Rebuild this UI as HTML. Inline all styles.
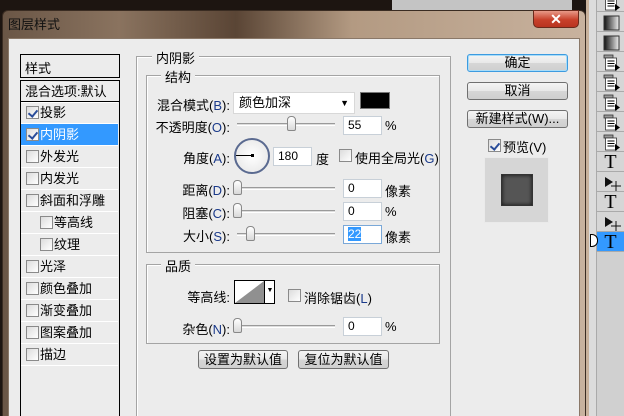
<!DOCTYPE html>
<html style="overflow:hidden;width:624px;height:416px"><head><meta charset="utf-8"><style>
*{margin:0;padding:0;box-sizing:border-box}
body{width:624px;height:416px;overflow:hidden;position:relative;background:#1d1511;font-family:"Liberation Sans","Noto Sans CJK SC",sans-serif;font-size:13px;color:#000}
.a{position:absolute}
.lbl{position:absolute;text-align:right;white-space:nowrap}
.inp{position:absolute;background:#fff;border:1px solid #c8d0d8;height:19px;padding-left:4px;line-height:17px;font-size:12px}
.sl{position:absolute;height:3px;border-top:1px solid #9a9a9a;border-bottom:1px solid #fff;background:#ddd}
.th{position:absolute;width:9px;height:15px;background:linear-gradient(#fff,#d8d8d8);border:1px solid #888;border-radius:4px 4px 2px 2px}
.cb{position:absolute;width:13px;height:13px;border:1px solid #8a8a8a;background:linear-gradient(135deg,#dcdcdc,#fff)}
.cb.c::after{content:"";position:absolute;left:3px;top:1px;width:4px;height:7px;border:solid #2a4d9a;border-width:0 2px 2px 0;transform:rotate(40deg)}
.it{position:absolute;left:21px;width:97px;height:22px;border-bottom:1px solid #fff;line-height:21px}
.btn{position:absolute;border:1px solid #707070;border-radius:3px;background:linear-gradient(#f4f4f4 0,#e8e8e8 50%,#d6d6d6 51%,#cfcfcf);text-align:center;line-height:15px}
.grp{position:absolute;border:1px solid #a4a4a4;box-shadow:1px 1px 0 #fff inset}
.gt{position:absolute;background:#ececec;padding:0 4px}
.row{position:absolute;left:597px;width:27px;height:20px;border-bottom:1px solid #aaa;background:#d6d6d6;text-align:center;font-family:"Liberation Serif",serif;font-size:20px;line-height:20px}
.row svg{position:absolute;left:6px;top:2px}
</style></head><body>
<div class="a" style="left:392px;top:0;width:180px;height:10px;background:#c4c4c4"></div>
<div class="a" style="left:586px;top:0;width:38px;height:416px;background:#d0d0d0"></div>
<div class="a" style="left:586px;top:0;width:3px;height:416px;background:#c9b29c"></div>
<div class="a" style="left:589px;top:0;width:8px;height:416px;background:#dcdcdc;border-right:1px solid #aaa"></div>
<svg width="0" height="0" style="position:absolute"><defs>
<g id="doc"><rect x="1" y="1" width="9" height="3" fill="#999" stroke="#333" stroke-width=".8"/><rect x="2.5" y="4" width="11" height="12" fill="#fff" stroke="#333" stroke-width=".8"/><path d="M4.5 7h7M4.5 9.5h7M4.5 12h7" stroke="#000" stroke-width="1"/><path d="M12 10l5 3.5-5 3.5z" fill="#000"/></g>
<linearGradient id="gr" x1="0" x2="1"><stop offset="0" stop-color="#111"/><stop offset="1" stop-color="#eee"/></linearGradient>
</defs></svg>
<div class="row" style="top:-8px"><svg width="18" height="18"><use href="#doc"/></svg></div>
<div class="row" style="top:12px"><svg width="18" height="18"><rect x="1" y="2" width="15" height="14" fill="url(#gr)" stroke="#333"/></svg></div>
<div class="row" style="top:32px"><svg width="18" height="18"><rect x="1" y="2" width="15" height="14" fill="url(#gr)" stroke="#333"/></svg></div>
<div class="row" style="top:52px"><svg width="18" height="18"><use href="#doc"/></svg></div>
<div class="row" style="top:72px"><svg width="18" height="18"><use href="#doc"/></svg></div>
<div class="row" style="top:92px"><svg width="18" height="18"><use href="#doc"/></svg></div>
<div class="row" style="top:112px"><svg width="18" height="18"><use href="#doc"/></svg></div>
<div class="row" style="top:132px"><svg width="18" height="18"><use href="#doc"/></svg></div>
<div class="row" style="top:152px">T</div>
<div class="row" style="top:172px"><svg width="20" height="18"><path d="M2 3l8 5-8 5z" fill="#111"/><path d="M13 7v10M8 12h10" stroke="#111"/></svg></div>
<div class="row" style="top:192px">T</div>
<div class="row" style="top:212px"><svg width="20" height="18"><path d="M2 3l8 5-8 5z" fill="#111"/><path d="M13 7v10M8 12h10" stroke="#111"/></svg></div>
<div class="row" style="top:232px;background:#3399ff">T</div>
<div class="a" style="left:590px;top:234px;width:8px;height:13px;background:#fff;border:1px solid #000;border-radius:0 6px 6px 0"></div>
<!-- dialog -->
<div class="a" style="left:2px;top:10px;width:584px;height:406px;border:1px solid #3a2c22;border-bottom:0;border-radius:6px 6px 0 0;background:linear-gradient(90deg,#6a5646 0,#8a735f 20%,#5a4535 40%,#b39a82 60%,#c8b29e 100%)"></div>
<div class="a" style="left:8px;top:14px;color:#111;font-size:13px">图层样式</div>
<div class="a" style="left:533px;top:10px;width:46px;height:18px;border:1px solid #6a2a1c;border-radius:0 0 5px 5px;background:linear-gradient(#e89a88,#c8402a 55%,#b83420);color:#fff;text-align:center;font-weight:bold;line-height:16px;font-size:14px">✕</div>
<div class="a" style="left:8px;top:38px;width:572px;height:378px;background:#ececec;border:1px solid #8a7868;border-bottom:0"></div>
<!-- left list -->
<div class="a" style="left:20px;top:54px;width:100px;height:362px;background:#ececec;border:1px solid #000;border-bottom:0"></div>
<div class="a" style="left:25px;top:58px">样式</div>
<div class="a" style="left:20px;top:77px;width:100px;height:4px;border-top:1px solid #000;border-bottom:1px solid #000;background:#ececec"></div>
<div class="it" style="top:81px;padding-left:4px">混合选项:默认</div>
<div class="a" style="left:20px;top:101px;width:100px;height:1px;background:#000"></div>
<div class="it" style="top:102px;padding-left:19px">投影</div><div class="cb c" style="left:26px;top:106px"></div>
<div class="it" style="top:124px;padding-left:19px;background:#3399ff;color:#fff">内阴影</div><div class="cb c" style="left:26px;top:128px"></div>
<div class="it" style="top:146px;padding-left:19px">外发光</div><div class="cb" style="left:26px;top:150px"></div>
<div class="it" style="top:168px;padding-left:19px">内发光</div><div class="cb" style="left:26px;top:172px"></div>
<div class="it" style="top:190px;padding-left:19px">斜面和浮雕</div><div class="cb" style="left:26px;top:194px"></div>
<div class="it" style="top:212px;padding-left:33px">等高线</div><div class="cb" style="left:40px;top:216px"></div>
<div class="it" style="top:234px;padding-left:33px">纹理</div><div class="cb" style="left:40px;top:238px"></div>
<div class="it" style="top:256px;padding-left:19px">光泽</div><div class="cb" style="left:26px;top:260px"></div>
<div class="it" style="top:278px;padding-left:19px">颜色叠加</div><div class="cb" style="left:26px;top:282px"></div>
<div class="it" style="top:300px;padding-left:19px">渐变叠加</div><div class="cb" style="left:26px;top:304px"></div>
<div class="it" style="top:322px;padding-left:19px">图案叠加</div><div class="cb" style="left:26px;top:326px"></div>
<div class="it" style="top:344px;padding-left:19px">描边</div><div class="cb" style="left:26px;top:348px"></div>
<!-- groups -->
<div class="grp" style="left:136px;top:56px;width:315px;height:360px;border-bottom:0"></div>
<div class="gt" style="left:152px;top:48px">内阴影</div>
<div class="grp" style="left:146px;top:75px;width:294px;height:178px"></div>
<div class="gt" style="left:161px;top:67px">结构</div>
<div class="lbl" style="right:394px;top:95px">混合模式(<span style="color:#1a3a8a">B</span>):</div>
<div class="a" style="left:233px;top:92px;width:122px;height:22px;background:#fff;border:1px solid #d8d8d8;padding-left:5px;line-height:20px">颜色加深<span style="position:absolute;right:5px;font-size:9px">▼</span></div>
<div class="a" style="left:360px;top:92px;width:30px;height:17px;background:#000;border:1px solid #777"></div>
<div class="lbl" style="right:394px;top:117px">不透明度(<span style="color:#1a3a8a">O</span>):</div>
<div class="sl" style="left:237px;top:123px;width:98px"></div><div class="th" style="left:287px;top:116px"></div>
<div class="inp" style="left:343px;top:116px;width:39px">55</div><div class="a" style="left:385px;top:118px">%</div>
<div class="lbl" style="right:394px;top:148px">角度(<span style="color:#1a3a8a">A</span>):</div>
<div class="a" style="left:234px;top:138px;width:36px;height:36px;border-radius:50%;border:2px solid #5a6a90;background:radial-gradient(#fff,#e4e4e4)"></div>
<div class="a" style="left:236px;top:155px;width:17px;height:1px;background:#000"></div>
<div class="a" style="left:251px;top:154px;width:3px;height:3px;background:#000"></div>
<div class="inp" style="left:273px;top:147px;width:39px">180</div><div class="a" style="left:316px;top:149px">度</div>
<div class="cb" style="left:339px;top:149px"></div><div class="a" style="left:355px;top:148px">使用全局光(<span style="color:#1a3a8a">G</span>)</div>
<div class="lbl" style="right:394px;top:180px">距离(<span style="color:#1a3a8a">D</span>):</div>
<div class="sl" style="left:237px;top:187px;width:98px"></div><div class="th" style="left:233px;top:180px"></div>
<div class="inp" style="left:343px;top:179px;width:39px">0</div><div class="a" style="left:385px;top:181px">像素</div>
<div class="lbl" style="right:394px;top:203px">阻塞(<span style="color:#1a3a8a">C</span>):</div>
<div class="sl" style="left:237px;top:210px;width:98px"></div><div class="th" style="left:233px;top:203px"></div>
<div class="inp" style="left:343px;top:202px;width:39px">0</div><div class="a" style="left:385px;top:204px">%</div>
<div class="lbl" style="right:394px;top:226px">大小(<span style="color:#1a3a8a">S</span>):</div>
<div class="sl" style="left:237px;top:233px;width:98px"></div><div class="th" style="left:246px;top:226px"></div>
<div class="inp" style="left:343px;top:225px;width:39px;border-color:#7aa8d8"><span style="background:#3399ff;color:#fff">22</span></div><div class="a" style="left:385px;top:227px">像素</div>
<div class="grp" style="left:146px;top:264px;width:294px;height:80px"></div>
<div class="gt" style="left:161px;top:256px">品质</div>
<div class="lbl" style="right:394px;top:287px">等高线:</div>
<div class="a" style="left:234px;top:280px;width:41px;height:24px;border:1px solid #000;background:#fff;overflow:hidden">
<svg width="30" height="22" style="position:absolute;left:0;top:0"><polygon points="0,22 29,0 29,22" fill="#909090"/></svg>
<div style="position:absolute;left:29px;top:0;width:11px;height:22px;border-left:1px solid #000;font-size:7px;text-align:center;line-height:20px">▼</div></div>
<div class="cb" style="left:288px;top:289px"></div><div class="a" style="left:304px;top:288px">消除锯齿(<span style="color:#1a3a8a">L</span>)</div>
<div class="lbl" style="right:394px;top:319px">杂色(<span style="color:#1a3a8a">N</span>):</div>
<div class="sl" style="left:237px;top:325px;width:98px"></div><div class="th" style="left:233px;top:318px"></div>
<div class="inp" style="left:343px;top:317px;width:39px">0</div><div class="a" style="left:385px;top:319px">%</div>
<div class="btn" style="left:198px;top:350px;width:90px;height:19px;line-height:17px">设置为默认值</div>
<div class="btn" style="left:298px;top:350px;width:91px;height:19px;line-height:17px">复位为默认值</div>
<!-- right -->
<div class="btn" style="left:467px;top:54px;width:101px;height:18px;border:1px solid #3c9be0;box-shadow:0 0 0 1px #a8dcf8 inset">确定</div>
<div class="btn" style="left:467px;top:82px;width:101px;height:18px">取消</div>
<div class="btn" style="left:467px;top:110px;width:101px;height:18px">新建样式(W)...</div>
<div class="cb c" style="left:488px;top:139px"></div><div class="a" style="left:503px;top:137px">预览(V)</div>
<div class="a" style="left:484px;top:157px;width:65px;height:66px;background:#d6d6d6;border:1px solid #eaeaea"></div>
<div class="a" style="left:501px;top:174px;width:32px;height:32px;background:#555;box-shadow:inset 0 0 4px #111;border:1px solid #333"></div>
</body></html>
